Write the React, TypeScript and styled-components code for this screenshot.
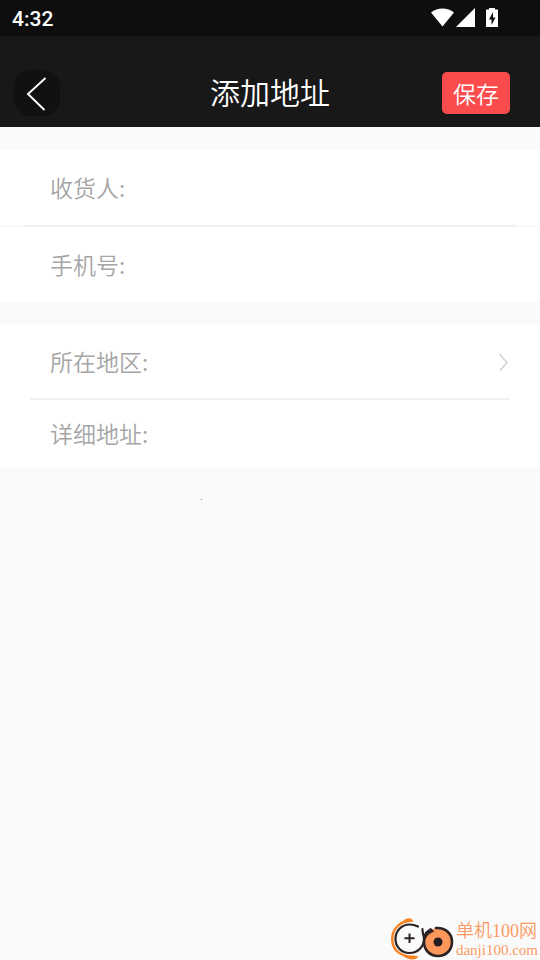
import React from "react";
import styled, { createGlobalStyle } from "styled-components";

const GlobalStyle = createGlobalStyle`
  * { box-sizing: border-box; }
  body {
    margin: 0;
    background: #fafafa;
    font-family: "Noto Sans CJK SC", sans-serif;
  }
  button, input { font: inherit; border: 0; padding: 0; margin: 0; }
`;

const Page = styled.div`
  position: relative;
  min-height: 100vh;
  background: #fafafa;
`;

const StatusBar = styled.div`
  display: flex;
  align-items: center;
  justify-content: space-between;
  height: 36px;
  padding: 0 41px 0 12px;
  background: #0e0e0e;
  color: #fff;
`;

const Clock = styled.time`
  padding-top: 2px;
  font: 500 21px/34px Roboto, sans-serif;
`;

const StatusIcons = styled.svg`
  display: block;
  width: 68px;
  height: 20px;
`;

const Header = styled.header`
  display: grid;
  grid-template-columns: 1fr auto 1fr;
  align-items: center;
  height: 91px;
  padding: 22px 30px 0 14px;
  background: #181818;
  color: #fff;
`;

const BackButton = styled.button`
  width: 46px;
  height: 46px;
  border-radius: 16px;
  background: #111;
  color: #fff;

  svg { display: block; }
`;

const Title = styled.h1`
  margin: 0 0 4px 16px;
  font-size: 30px;
  font-weight: 350;
  line-height: 44px;
`;

const SaveButton = styled.button`
  justify-self: end;
  width: 68px;
  height: 42px;
  border-radius: 5px;
  background: #fa4c4c;
  color: #fff;
  font-size: 23px;
  font-weight: 350;
  line-height: 42px;
`;

const Form = styled.form`
  display: flex;
  flex-direction: column;
  gap: 22px;
  padding-top: 23px;
`;

const Group = styled.div`
  background: #fff;
`;

const Row = styled.div<{ $height: number; $bottom?: number }>`
  display: flex;
  align-items: center;
  gap: 12px;
  height: ${(p) => p.$height}px;
  padding: 0 31px ${(p) => p.$bottom ?? 0}px 50px;
  color: #a5a5a5;
  font-size: 23px;
  font-weight: 350;
  line-height: 34px;
`;

const Label = styled.label`
  flex: none;
`;

const Field = styled.input`
  flex: 1;
  min-width: 0;
  height: 44px;
  background: transparent;
  color: #333;
  outline: none;
`;

const RegionButton = styled.button`
  display: flex;
  flex: 1;
  align-items: center;
  justify-content: flex-end;
  height: 44px;
  background: transparent;
  color: #ccc;
`;

const Divider = styled.div<{ $inset: number; $edge: string }>`
  height: 2px;
  padding: 0 ${(p) => p.$inset}px;
  background: ${(p) => p.$edge};

  &::before {
    content: "";
    display: block;
    height: 2px;
    background: #f0f0f0;
  }
`;

const Speck = styled.span`
  position: absolute;
  top: 499px;
  left: 201px;
  width: 1px;
  height: 1px;
  background: #888;
`;

const Watermark = styled.a`
  position: absolute;
  right: 2px;
  bottom: 0;
  display: flex;
  align-items: center;
  gap: 2px;
  color: #fa9a62;
  text-decoration: none;
`;

const SiteText = styled.span`
  display: flex;
  flex-direction: column;
  padding-top: 2px;
  font-family: "Liberation Serif", "Noto Sans CJK SC", serif;
`;

const SiteName = styled.span`
  font-size: 18px;
  font-weight: 350;
  line-height: 20px;
`;

const SiteHost = styled.span`
  font-size: 15px;
  line-height: 18px;
`;

export default function App() {
  return (
    <Page>
      <GlobalStyle />
      <StatusBar>
        <Clock>4:32</Clock>
        <StatusIcons viewBox="0 0 68 20" aria-hidden="true">
          <path d="M0 4.500C6.400-1 16.600-1 23 4.500L11.500 18.500Z" fill="#fff" />
          <path d="M44 0V19H25Z" fill="#fff" />
          <path
            d="M58 0H64V1.500H66.500Q67 1.500 67 2.200V18.400Q67 19 66.400 19H55.600Q55 19 55 18.400V2.200Q55 1.500 55.600 1.500H58Z"
            fill="#fff"
          />
          <path d="M62 4 58 11.400H60.500V17L64.500 9.400H62Z" fill="#0e0e0e" />
        </StatusIcons>
      </StatusBar>
      <Header>
        <BackButton type="button" aria-label="返回">
          <svg width="46" height="46" viewBox="0 0 46 46" fill="none" aria-hidden="true">
            <path d="M31.5 8 14 24 30.5 40" stroke="currentColor" strokeWidth="1.9" />
          </svg>
        </BackButton>
        <Title>添加地址</Title>
        <SaveButton type="submit" form="address">保存</SaveButton>
      </Header>
      <Form id="address" onSubmit={(e) => e.preventDefault()}>
        <Group>
          <Row $height={75} $bottom={2}>
            <Label htmlFor="name">收货人:</Label>
            <Field id="name" autoComplete="name" />
          </Row>
          <Divider $inset={24} $edge="#fafafa" />
          <Row $height={75} $bottom={2}>
            <Label htmlFor="phone">手机号:</Label>
            <Field id="phone" type="tel" />
          </Row>
        </Group>
        <Group>
          <Row $height={74}>
            <Label htmlFor="region">所在地区:</Label>
            <RegionButton id="region" type="button">
              <svg width="11" height="22" viewBox="0 0 11 22" fill="none" aria-hidden="true">
                <path d="M1.5 4 9 12.5 2 20.500" stroke="currentColor" strokeWidth="1.3" />
              </svg>
            </RegionButton>
          </Row>
          <Divider $inset={30} $edge="#ffffff" />
          <Row $height={68} $bottom={2}>
            <Label htmlFor="detail">详细地址:</Label>
            <Field id="detail" />
          </Row>
        </Group>
      </Form>
      <Speck />
      <Watermark href="#">
        <svg width="64" height="42" viewBox="0 0 64 42" fill="none" aria-hidden="true">
          <path
            d="M22 1.500C20-.5 16-.2 13 3 6 6 1 13 1 21 1 30 6 36 13 38 18 42 26 43 28.500 38.500L24 37.500C11 38 3.500 31 3.500 21 3.500 11 11 4 22 4Q24 2.500 22 1.500Z"
            fill="#f98426"
          />
          <path
            d="M28 8.500C25 7 22 6.500 19.500 6.500 11.500 6.500 5.500 13 5.500 21 5.500 29 11.500 35 19.500 35 27.500 35 34 29 34 21 34 17 32 15 32.500 11"
            stroke="#2a2224"
            strokeWidth="2.200"
            strokeLinecap="round"
          />
          <path d="M19.500 15.500V25M14.500 20.250H24.500" stroke="#2a2224" strokeWidth="2" />
          <circle cx="48" cy="24" r="14" fill="#fd985a" />
          <path
            d="M40.500 11.500 42 13C37 15 34 19 34 24 34 32 40 38 48 38 56 38 62 32 62 24 62 16 56 9.500 46 10"
            stroke="#2a2224"
            strokeWidth="2.600"
            strokeLinecap="round"
          />
          <path d="M39.500 12Q36 14 34.500 18" stroke="#2a2224" strokeWidth="2.400" />
          <circle cx="48" cy="24" r="4.500" fill="#241c20" />
        </svg>
        <SiteText>
          <SiteName>单机100网</SiteName>
          <SiteHost>danji100.com</SiteHost>
        </SiteText>
      </Watermark>
    </Page>
  );
}
